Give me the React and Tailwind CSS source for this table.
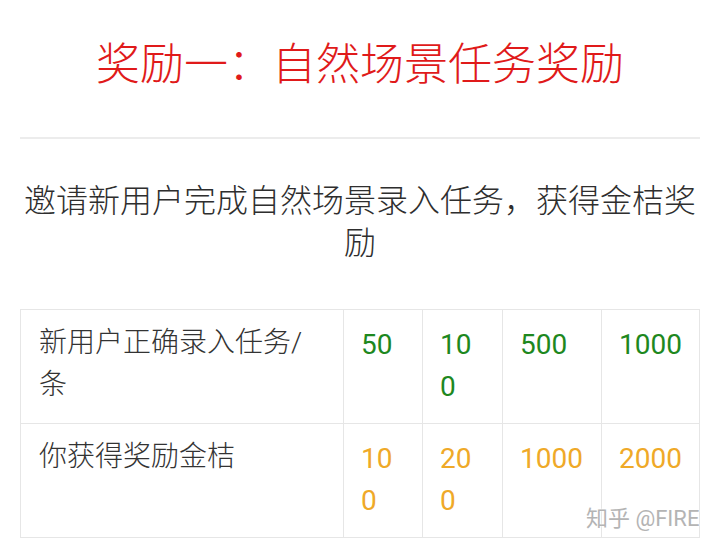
import React from "react";

const font = { fontFamily: 'Roboto, "Noto Sans CJK SC", sans-serif' };

const rows = [
  { label: "新用户正确录入任务/条", values: ["50", "100", "500", "1000"], color: "text-[#1e881e]" },
  { label: "你获得奖励金桔", values: ["100", "200", "1000", "2000"], color: "text-[#efa928]" },
];

export default function App() {
  return (
    <div
      className="relative w-[720px] h-[553px] overflow-hidden bg-white"
      style={font}
    >
      <div className="px-5">
        <h1 className="pt-[35px] text-center text-[44px] leading-[60px] font-light text-[#e01a1a] tracking-normal">
          奖励一：自然场景任务奖励
        </h1>
        <div className="mt-[42px] h-[2px] bg-[#ececec]" />
        <p className="mt-[41px] text-center text-[32px] leading-[42px] font-light text-[#2e2e2e]">
          邀请新用户完成自然场景录入任务，获得金桔奖励
        </p>
        <div className="mt-[45px] grid w-[680px] grid-cols-[323px_79px_80px_99px_98px] border-l-[1.5px] border-t-[1.5px] border-[#e6e6e6]">
          {rows.map((row, i) => (
            <React.Fragment key={i}>
              <div className="border-r-[1.5px] border-b-[1.5px] border-[#e6e6e6] pl-[18px] pr-[16px] pt-[12px] pb-[17px] text-[28px] leading-[42px] font-light text-[#333333] break-all">
                {row.label}
              </div>
              {row.values.map((v, j) => (
                <div
                  key={j}
                  className={`border-r-[1.5px] border-b-[1.5px] border-[#e6e6e6] pl-[17px] pr-[15px] pt-[14px] pb-[15px] text-[28px] leading-[42px] break-all ${row.color}`}
                >
                  {v}
                </div>
              ))}
            </React.Fragment>
          ))}
        </div>
      </div>
      <div
        className="absolute left-[586px] top-[505px] text-[22px] leading-[28px] text-[#b4b4b4] whitespace-nowrap"
        style={{ textShadow: "0 0 2px #ffffff, 0 0 1px #ffffff" }}
      >
        知乎 @FIRE
      </div>
    </div>
  );
}
